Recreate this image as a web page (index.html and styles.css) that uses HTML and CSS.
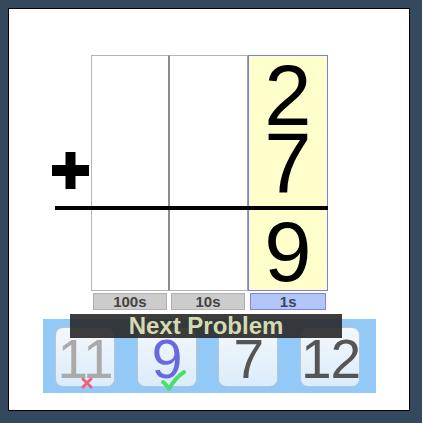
FILE: index.html
```html
<!DOCTYPE html>
<html>
<head>
<meta charset="utf-8">
<link rel="stylesheet" href="styles.css">
</head>
<body>
<div class="panel">
  <div class="problem">
    <div class="row">
      <div class="sign">
        <svg class="plus" width="37" height="37" viewBox="0 0 37 37"><rect x="13.5" y="0" width="10" height="37" fill="#000"/><rect x="0" y="13" width="37" height="11" fill="#000"/></svg>
      </div>
      <div class="col c1"><div class="top"></div><div class="bottom"></div></div>
      <div class="col c2"><div class="top"></div><div class="bottom"></div></div>
      <div class="col c3"><div class="top"><div class="digit">2</div><div class="digit">7</div></div><div class="bottom"><div class="digit">9</div></div></div>
    </div>
    <div class="labels">
      <div class="label l1">100s</div>
      <div class="label l2">10s</div>
      <div class="label l3 ones">1s</div>
    </div>
    <div class="rule"></div>
  </div>
  <div class="strip">
    <div class="next">Next Problem</div>
    <div class="btn wrong">11
      <svg class="mark-x" width="12" height="12" viewBox="0 0 12 12"><path d="M2 2 L10 10 M10 2 L2 10" stroke="#f0607a" stroke-width="3" stroke-linecap="round"/></svg>
    </div>
    <div class="btn right">9
      <svg class="mark-check" width="26" height="23" viewBox="0 0 26 23"><path d="M3 13 Q6 15 9 20 Q15 9 24 3" fill="none" stroke="#4fdc6e" stroke-width="4" stroke-linecap="round" stroke-linejoin="round"/></svg>
    </div>
    <div class="btn">7</div>
    <div class="btn">12</div>
  </div>
</div>
</body>
</html>
```

FILE: styles.css
```css
html, body {
  margin: 0;
  padding: 0;
}
body {
  background: #34495e;
  font-family: "Liberation Sans", Arial, sans-serif;
}
.panel {
  margin: 8px;
  width: 400px;
  height: 401px;
  border: 1px solid #000;
  background: #fff;
  overflow: hidden;
}
.problem {
  position: relative;
  margin: 46px 0 0 43px;
  width: 276px;
}
.row {
  display: flex;
}
.sign {
  width: 39px;
  flex: none;
}
.plus {
  display: block;
  margin-top: 97px;
}
.col {
  box-sizing: border-box;
  height: 236px;
  border: 1px solid #a4a4a4;
  display: flex;
  flex-direction: column;
  flex: none;
}
.c1 { width: 78px; border-color: #b4b4b4 #8c8c8c #b4b4b4 #b4b4b4; }
.c2 { width: 79px; border-color: #b4b4b4 #a0a0a0 #b4b4b4 #8c8c8c; }
.c3 { width: 80px; border-color: #7b7bf0; background: #ffffcc; }
.top {
  height: 150px;
  padding-top: 6px;
  box-sizing: border-box;
}
.bottom {
  flex: 1;
  padding-top: 12px;
}
.digit {
  font-size: 85px;
  line-height: 67px;
  text-align: center;
  color: #000;
}
.rule {
  position: absolute;
  top: 151px;
  left: 3px;
  right: 0;
  height: 4px;
  background: #000;
}
.labels {
  display: flex;
  padding-left: 39px;
  margin-top: 2px;
}
.label {
  box-sizing: border-box;
  height: 17px;
  margin: 0 2px;
  border: 1px solid #b0b0b0;
  background: #cccccc;
  color: #444;
  font-weight: bold;
  font-size: 15px;
  line-height: 15px;
  text-align: center;
}
.l1 { width: 74px; }
.l2 { width: 75px; }
.l3 { width: 76px; margin-left: 3px; }
.ones {
  background: #b4c6f8;
  border-color: #7b84ee;
  color: #3a4660;
}
.strip {
  position: relative;
  box-sizing: border-box;
  margin: 9px 0 0 34px;
  width: 333px;
  height: 74px;
  padding: 8px 0 0 12px;
  background: #93c9f7;
  display: flex;
  gap: 21.67px;
}
.next {
  position: absolute;
  top: -5px;
  left: 27px;
  width: 272px;
  height: 24px;
  background: rgba(40, 40, 40, 0.9);
  color: #d6dab0;
  font-weight: bold;
  font-size: 24px;
  line-height: 24px;
  text-align: center;
  z-index: 2;
}
.btn {
  position: relative;
  box-sizing: border-box;
  width: 60px;
  height: 60px;
  flex: none;
  border: 1px solid #b6c6d6;
  border-radius: 8px;
  background: linear-gradient(to bottom, #f3f7fb, #dbecfb);
  color: #555;
  font-size: 55px;
  line-height: 62px;
  text-align: center;
  letter-spacing: -1px;
}
.wrong { color: #aaaaaa; }
.right { color: #6868e0; }
.mark-x {
  position: absolute;
  left: 25px;
  top: 49px;
}
.mark-check {
  position: absolute;
  left: 22px;
  top: 41px;
}
```
